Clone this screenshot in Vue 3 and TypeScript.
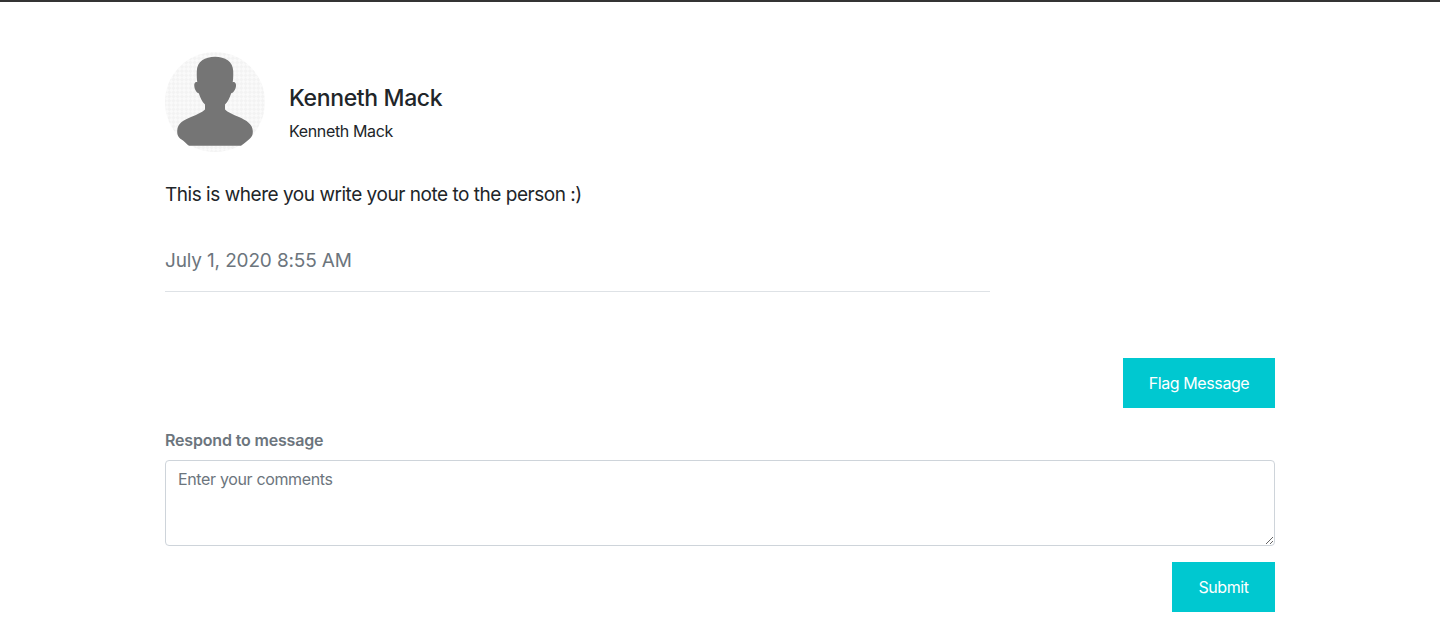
<script setup lang="ts">
const name = 'Kenneth Mack';
const note = 'This is where you write your note to the person :)';
const sentAt = 'July 1, 2020 8:55 AM';
</script>

<template>
  <main class="page">
    <section class="message">
      <div class="sender">
        <svg class="avatar" viewBox="0 0 100 100" width="100" height="100" aria-hidden="true">
          <defs>
            <pattern id="hatch" width="6" height="6" patternUnits="userSpaceOnUse" patternTransform="rotate(45)">
              <rect width="6" height="6" fill="#fafafa" />
              <rect width="3" height="3" fill="#f3f3f3" />
              <rect x="3" y="3" width="3" height="3" fill="#f3f3f3" />
            </pattern>
          </defs>
          <circle cx="50" cy="50" r="50" fill="url(#hatch)" />
          <path
            fill="#757575"
            d="M50 4.7C40 4.7 32 9.5 31.8 19C31.6 24 31.9 28 32.3 30.2C30 29.6 29 31.5 29.3 34C29.7 37.8 31.5 40.8 33.8 41.2C35.3 46 37 49.5 40 52.5L40 57.5C37.5 60 32 62.5 26 65C18.5 68 12.4 71.5 12.2 79C12.1 84 14 86 18 88.5C20 90 21.5 92 24 93.8L76 93.8C78.5 92 81 90 83 88.2C86.5 85.5 88 83.5 87.8 79C87.5 72 81.5 68.5 74 65C68 62.5 62.5 60 60 57.5L60 52.5C63 49.5 64.7 46 66.2 41.2C68.5 40.8 70.5 37.8 71 34C71.3 31.5 70 29.6 67.7 30.2C68.1 28 68.4 24 68.2 19C68 9.5 60 4.7 50 4.7Z"
          />
        </svg>
        <div class="sender__names">
          <h2 class="sender__title">{{ name }}</h2>
          <p class="sender__subtitle">{{ name }}</p>
        </div>
      </div>
      <p class="message__note">{{ note }}</p>
      <p class="message__date">{{ sentAt }}</p>
    </section>

    <div class="actions actions--flag">
      <button type="button" class="btn btn--flag">Flag Message</button>
    </div>

    <form class="reply" @submit.prevent>
      <label class="reply__label" for="comments">Respond to message</label>
      <textarea id="comments" class="reply__input" placeholder="Enter your comments"></textarea>
      <div class="actions">
        <button type="submit" class="btn btn--submit">Submit</button>
      </div>
    </form>
  </main>
</template>

<style>
body {
  background: #fff;
}
</style>

<style scoped>
.page {
  box-sizing: border-box;
  height: 625px;
  overflow: hidden;
  padding: 50px 165px 0;
  border-top: 2px solid #343434;
  font-family: Inter, "Liberation Sans", sans-serif;
  color: #212529;
}

.message {
  width: 825px;
  padding-bottom: 17px;
  border-bottom: 1px solid #dee2e6;
}

.sender {
  display: flex;
  align-items: center;
  gap: 24px;
}

.avatar {
  display: block;
  flex-shrink: 0;
}

.sender__names {
  padding-top: 24px;
}

.sender__title {
  margin: 0 0 8px;
  font-size: 23px;
  font-weight: 500;
  line-height: 26px;
  letter-spacing: -0.36px;
}

.sender__subtitle {
  margin: 0;
  font-size: 16px;
  line-height: 24px;
  letter-spacing: -0.36px;
}

.message__note {
  margin: 29px 0 0;
  font-size: 19px;
  line-height: 27px;
  letter-spacing: -0.47px;
}

.message__date {
  margin: 39px 0 0;
  font-size: 19px;
  line-height: 27px;
  letter-spacing: -0.15px;
  color: #6c757d;
}

.actions {
  display: flex;
  justify-content: flex-end;
}

.actions--flag {
  margin-top: 66px;
}

.btn {
  height: 50px;
  padding: 0;
  border: 0;
  border-radius: 0;
  background: #00c8d0;
  color: #fff;
  font-family: inherit;
  font-size: 16px;
  line-height: 24px;
  letter-spacing: -0.4px;
  cursor: pointer;
}

.btn--flag {
  width: 152px;
}

.btn--submit {
  width: 103px;
}

.reply {
  display: flex;
  flex-direction: column;
  margin-top: 22px;
}

.reply__label {
  margin-bottom: 9px;
  font-size: 16px;
  font-weight: 600;
  line-height: 21px;
  letter-spacing: -0.17px;
  color: #6c757d;
}

.reply__input {
  box-sizing: border-box;
  display: block;
  width: 100%;
  height: 86px;
  margin-bottom: 16px;
  padding: 6px 12px;
  border: 1px solid #ced4da;
  border-radius: 4px;
  font-family: inherit;
  font-size: 16px;
  line-height: 24px;
  letter-spacing: -0.35px;
  color: #495057;
  outline: none;
}

.reply__input::placeholder {
  color: #6c757d;
  opacity: 1;
}
</style>
